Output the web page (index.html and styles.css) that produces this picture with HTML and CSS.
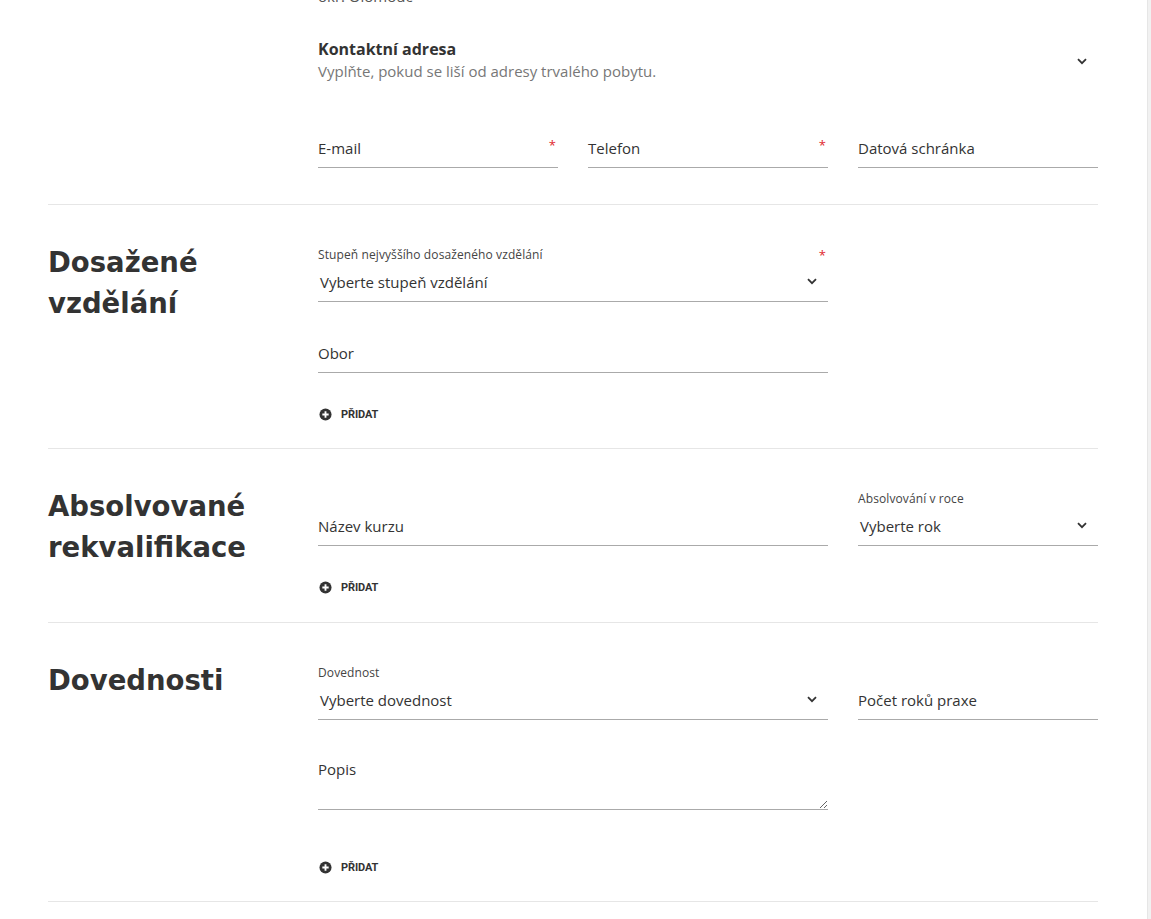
FILE: index.html
```html
<!DOCTYPE html>
<html lang="cs">
<head>
<meta charset="utf-8">
<title>Formulář</title>
<link rel="stylesheet" href="styles.css">
</head>
<body>
<div class="viewport">
  <main class="page">
    <section class="sec sec-first">
      <div class="sec-head"></div>
      <div class="sec-body">
        <p class="clipped">okr. Olomouc</p>
        <div class="collapsible">
          <div class="collapsible-text">
            <div class="collapsible-title">Kontaktní adresa</div>
            <div class="collapsible-sub">Vyplňte, pokud se liší od adresy trvalého pobytu.</div>
          </div>
          <svg class="chev" viewBox="0 0 10 7" width="10" height="7"><path d="M1 1.2 5 5.2 9 1.2" fill="none" stroke="#333" stroke-width="1.8"/></svg>
        </div>
        <div class="grid3 contact-grid">
          <div class="field">
            <div class="flabel"></div>
            <div class="control"><span class="ph">E-mail</span></div>
            <span class="req req-input">*</span>
          </div>
          <div class="field">
            <div class="flabel"></div>
            <div class="control"><span class="ph">Telefon</span></div>
            <span class="req req-input">*</span>
          </div>
          <div class="field">
            <div class="flabel"></div>
            <div class="control"><span class="ph">Datová schránka</span></div>
          </div>
        </div>
      </div>
    </section>

    <section class="sec">
      <h2 class="sec-head title">Dosažené vzdělání</h2>
      <div class="sec-body">
        <div class="grid3">
          <div class="field span2">
            <div class="flabel">Stupeň nejvyššího dosaženého vzdělání</div>
            <div class="control select"><span class="val">Vyberte stupeň vzdělání</span>
              <svg class="chev" viewBox="0 0 10 7" width="10" height="7"><path d="M1 1.2 5 5.2 9 1.2" fill="none" stroke="#333" stroke-width="1.8"/></svg>
            </div>
            <span class="req req-label">*</span>
          </div>
          <div class="field span2 row-start">
            <div class="flabel"></div>
            <div class="control"><span class="ph">Obor</span></div>
          </div>
        </div>
        <button class="add" type="button">
          <svg viewBox="0 0 14 14" width="13" height="13"><circle cx="7" cy="7" r="6.5" fill="#333"/><path d="M7 3.6v6.8M3.6 7h6.8" stroke="#fff" stroke-width="2"/></svg>
          <span>Přidat</span>
        </button>
      </div>
    </section>

    <section class="sec sec-mid">
      <h2 class="sec-head title">Absolvované rekvalifikace</h2>
      <div class="sec-body">
        <div class="grid3">
          <div class="field span2">
            <div class="flabel"></div>
            <div class="control"><span class="ph">Název kurzu</span></div>
          </div>
          <div class="field">
            <div class="flabel">Absolvování v roce</div>
            <div class="control select"><span class="val">Vyberte rok</span>
              <svg class="chev" viewBox="0 0 10 7" width="10" height="7"><path d="M1 1.2 5 5.2 9 1.2" fill="none" stroke="#333" stroke-width="1.8"/></svg>
            </div>
          </div>
        </div>
        <button class="add" type="button">
          <svg viewBox="0 0 14 14" width="13" height="13"><circle cx="7" cy="7" r="6.5" fill="#333"/><path d="M7 3.6v6.8M3.6 7h6.8" stroke="#fff" stroke-width="2"/></svg>
          <span>Přidat</span>
        </button>
      </div>
    </section>

    <section class="sec">
      <h2 class="sec-head title">Dovednosti</h2>
      <div class="sec-body">
        <div class="grid3">
          <div class="field span2">
            <div class="flabel">Dovednost</div>
            <div class="control select"><span class="val">Vyberte dovednost</span>
              <svg class="chev" viewBox="0 0 10 7" width="10" height="7"><path d="M1 1.2 5 5.2 9 1.2" fill="none" stroke="#333" stroke-width="1.8"/></svg>
            </div>
          </div>
          <div class="field">
            <div class="flabel"></div>
            <div class="control"><span class="ph">Počet roků praxe</span></div>
          </div>
          <div class="field span2 row-start">
            <div class="flabel"></div>
            <textarea class="area" placeholder="Popis"></textarea>
          </div>
        </div>
        <button class="add add-after-area" type="button">
          <svg viewBox="0 0 14 14" width="13" height="13"><circle cx="7" cy="7" r="6.5" fill="#333"/><path d="M7 3.6v6.8M3.6 7h6.8" stroke="#fff" stroke-width="2"/></svg>
          <span>Přidat</span>
        </button>
      </div>
    </section>
    <section class="sec sec-last"></section>
  </main>
  <div class="scrollbar"></div>
</div>
</body>
</html>
```

FILE: styles.css
```css
* { box-sizing: border-box; }
html, body { margin: 0; padding: 0; background: #fff; }
body {
  font-family: "Open Sans", "Noto Sans", sans-serif;
  color: #333;
  font-size: 15px;
  overflow: hidden;
}
.viewport {
  display: flex;
  height: 919px;
  overflow: hidden;
}
.page {
  width: 1050px;
  margin-left: 48px;
  margin-top: -14px;
  flex: none;
}
.scrollbar {
  margin-left: auto;
  width: 4px;
  background: #f1f1f1;
  border-left: 1px solid #e6e6e6;
  height: 919px;
}

.sec {
  display: grid;
  grid-template-columns: 270px 780px;
  border-top: 1px solid #e6e6e6;
  padding-bottom: 24px;
}
.sec-first { border-top: none; padding-bottom: 36px; }
.sec-mid { padding-bottom: 25px; }
.sec-last { padding: 0; height: 40px; }

.sec-head { margin: 0; padding-top: 37px; }
.sec-first .sec-head { padding-top: 0; }
.title {
  font-family: "DejaVu Sans", sans-serif;
  font-weight: bold;
  font-size: 27.5px;
  line-height: 40.5px;
  color: #333;
}
.sec-body { padding-top: 43px; }
.sec-first .sec-body { padding-top: 0; }

.clipped { margin: 0; line-height: 20px; color: #555; }

.collapsible {
  margin-top: 33px;
  display: flex;
  align-items: center;
  justify-content: space-between;
  padding-right: 11px;
}
.collapsible-title { font-weight: bold; font-size: 16px; line-height: 20px; color: #333; }
.collapsible-sub { color: #777; line-height: 24px; }

.contact-grid { margin-top: 31px; }

.grid3 {
  display: grid;
  grid-template-columns: repeat(3, 240px);
  column-gap: 30px;
  row-gap: 17px;
}
.span2 { grid-column: span 2; }
.row-start { grid-column: 1 / span 2; }

.field { position: relative; display: flex; flex-direction: column; }
.flabel {
  height: 14px;
  font-size: 12px;
  line-height: 14px;
  letter-spacing: 0.1px;
  color: #444;
  white-space: nowrap;
}
.control {
  height: 40px;
  border-bottom: 1px solid #aaa;
  display: flex;
  align-items: center;
  justify-content: space-between;
  line-height: 20px;
}
.ph { color: #333; }
.select { padding-left: 2px; padding-right: 11px; }
.req {
  position: absolute;
  right: 2px;
  color: #e0282e;
  font-size: 13px;
  line-height: 10px;
}
.req-input { top: 26px; }
.req-label { top: 2px; }

.area {
  display: block;
  width: 100%;
  height: 59px;
  border: none;
  border-bottom: 1px solid #aaa;
  resize: vertical;
  font: inherit;
  color: #333;
  padding: 8px 0 0 0;
  line-height: 20px;
  outline: none;
}
.area::placeholder { color: #333; opacity: 1; }

.add {
  margin-top: 31px;
  display: flex;
  align-items: center;
  gap: 9px;
  height: 20px;
  padding: 0 0 0 1px;
  border: none;
  background: none;
  font-family: "Roboto", sans-serif;
  font-weight: bold;
  font-size: 11px;
  text-transform: uppercase;
  color: #333;
  letter-spacing: -0.1px;
}
.add-after-area { margin-top: 47px; }
```
